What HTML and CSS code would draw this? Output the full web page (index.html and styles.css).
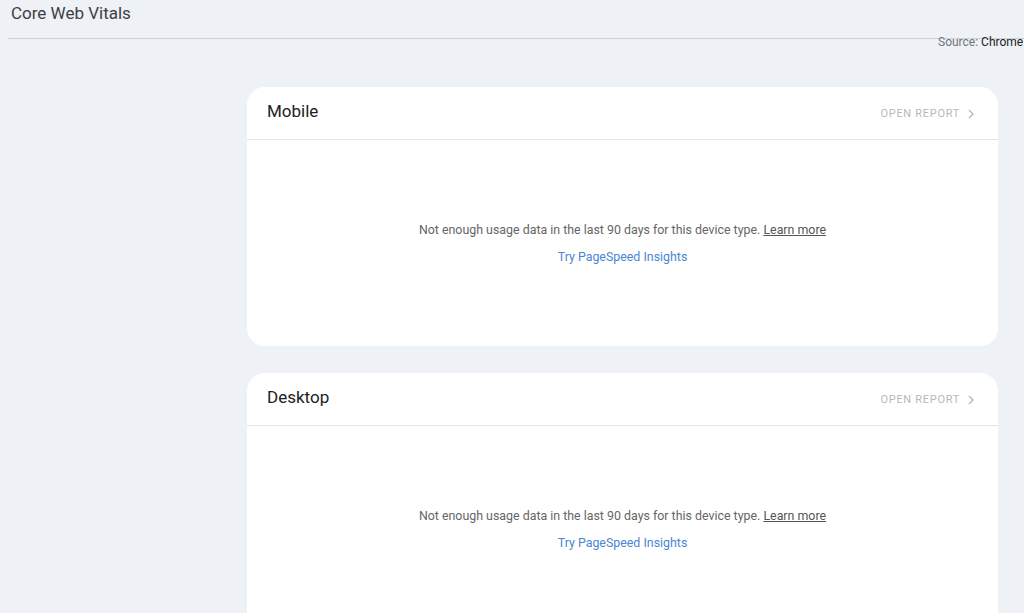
FILE: index.html
```html
<!DOCTYPE html>
<html lang="en">
  <head>
    <meta charset="UTF-8" />
    <meta name="viewport" content="width=device-width, initial-scale=1.0" />
    <title>Core Web Vitals</title>
    <link rel="stylesheet" href="styles.css">
  </head>
  <body>
    <header class="topbar">
      <h1 class="title">Core Web Vitals</h1>
    </header>
    <div class="source">Source: <span class="source-name">Chrome</span></div>

    <main class="cards">
      <section class="card">
        <div class="card-head">
          <h2 class="card-title">Mobile</h2>
          <a class="open-report" href="#">OPEN REPORT
            <svg class="chevron" width="10" height="10" viewBox="0 0 10 10"><path d="M3 1l4 4-4 4" fill="none" stroke="currentColor" stroke-width="1.4"/></svg>
          </a>
        </div>
        <div class="card-body">
          <p class="empty">Not enough usage data in the last 90 days for this device type. <a class="learn" href="#">Learn more</a></p>
          <p class="try"><a href="#">Try PageSpeed Insights</a></p>
        </div>
      </section>

      <section class="card">
        <div class="card-head">
          <h2 class="card-title">Desktop</h2>
          <a class="open-report" href="#">OPEN REPORT
            <svg class="chevron" width="10" height="10" viewBox="0 0 10 10"><path d="M3 1l4 4-4 4" fill="none" stroke="currentColor" stroke-width="1.4"/></svg>
          </a>
        </div>
        <div class="card-body">
          <p class="empty">Not enough usage data in the last 90 days for this device type. <a class="learn" href="#">Learn more</a></p>
          <p class="try"><a href="#">Try PageSpeed Insights</a></p>
        </div>
      </section>
    </main>
  </body>
</html>
```

FILE: styles.css
```css
body {
  margin: 0;
  background: #eef1f6;
  font-family: Roboto, "Liberation Sans", sans-serif;
  color: #3c4043;
  overflow: hidden;
}
.topbar {
  margin-left: 8px;
  padding: 3px 0 15px 3px;
  border-bottom: 1px solid #cfd2d7;
}
.title {
  margin: 0;
  font-size: 17px;
  line-height: 20px;
  font-weight: 400;
  color: #3c4043;
}
.source {
  margin: -4px 0 38px;
  padding-left: 938px;
  font-size: 12px;
  line-height: 14px;
  color: #70757a;
  white-space: nowrap;
}
.source-name {
  color: #202124;
}
.cards {
  margin-left: 247px;
  width: 751px;
  display: flex;
  flex-direction: column;
  gap: 27px;
}
.card {
  background: #fff;
  border-radius: 18px;
}
.card-head {
  height: 52px;
  padding: 0 22px 0 20px;
  display: flex;
  align-items: center;
  justify-content: space-between;
  border-bottom: 1px solid #e3e5e8;
}
.card-title {
  margin: 0 0 4px;
  font-size: 17px;
  font-weight: 400;
  color: #202124;
}
.open-report {
  display: flex;
  align-items: center;
  gap: 6px;
  margin-top: 1px;
  font-size: 11px;
  letter-spacing: 0.7px;
  color: #b8b8b8;
  text-decoration: none;
}
.card-body {
  padding: 81px 20px 80px;
  text-align: center;
  font-size: 12.4px;
  line-height: 18px;
}
.empty {
  margin: 0;
  color: #666;
}
.learn {
  color: #555;
}
.try {
  margin: 9px 0 0;
}
.try a {
  color: #4a86d4;
  text-decoration: none;
}
```
